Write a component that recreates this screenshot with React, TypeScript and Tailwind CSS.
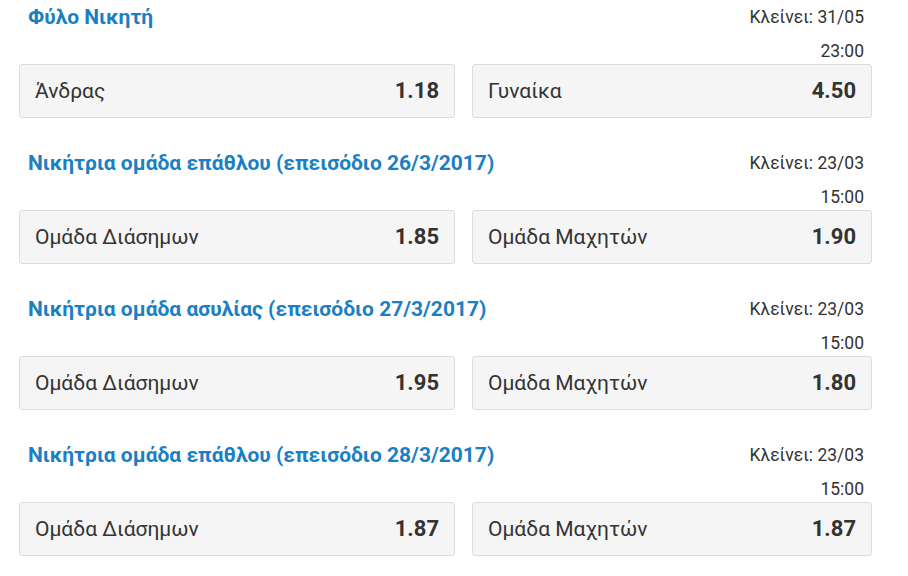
import React from "react";

type Section = {
  title: string;
  date: string;
  time: string;
  left: [string, string];
  right: [string, string];
};

const sections: Section[] = [
  { title: "Φύλο Νικητή", date: "Κλείνει: 31/05", time: "23:00", left: ["Άνδρας", "1.18"], right: ["Γυναίκα", "4.50"] },
  { title: "Νικήτρια ομάδα επάθλου (επεισόδιο 26/3/2017)", date: "Κλείνει: 23/03", time: "15:00", left: ["Ομάδα Διάσημων", "1.85"], right: ["Ομάδα Μαχητών", "1.90"] },
  { title: "Νικήτρια ομάδα ασυλίας (επεισόδιο 27/3/2017)", date: "Κλείνει: 23/03", time: "15:00", left: ["Ομάδα Διάσημων", "1.95"], right: ["Ομάδα Μαχητών", "1.80"] },
  { title: "Νικήτρια ομάδα επάθλου (επεισόδιο 28/3/2017)", date: "Κλείνει: 23/03", time: "15:00", left: ["Ομάδα Διάσημων", "1.87"], right: ["Ομάδα Μαχητών", "1.87"] },
];

function Odd({ label, value, w }: { label: string; value: string; w: string }) {
  return (
    <div className={`${w} h-[54px] flex items-center pl-[15px] pr-[15px] bg-[#f5f5f5] border border-[#dddddd] rounded-[3px]`}>
      <div className="flex w-full items-baseline justify-between">
        <span className="text-[21px] text-[#333333]">{label}</span>
        <span className="text-[22px] font-bold text-[#333333]">{value}</span>
      </div>
    </div>
  );
}

export default function App() {
  return (
    <div className="w-[908px] h-[576px] bg-white overflow-hidden" style={{ fontFamily: "Roboto, 'Noto Sans', sans-serif" }}>
      {sections.map((s, i) => (
        <div key={i} className="mb-[28px]">
          <div className="flex justify-between h-[64px]">
            <div className="pl-[28px] leading-[34px] text-[21px] font-bold text-[#1b7fc2]">{s.title}</div>
            <div className="pr-[44px] text-right text-[17.5px] text-[#333333]">
              <div className="h-[34px] leading-[34px]">{s.date}</div>
              <div className="h-[30px] leading-[34px]">{s.time}</div>
            </div>
          </div>
          <div className="flex pl-[19px] gap-[17px]">
            <Odd label={s.left[0]} value={s.left[1]} w="w-[436px]" />
            <Odd label={s.right[0]} value={s.right[1]} w="w-[400px]" />
          </div>
        </div>
      ))}
    </div>
  );
}
